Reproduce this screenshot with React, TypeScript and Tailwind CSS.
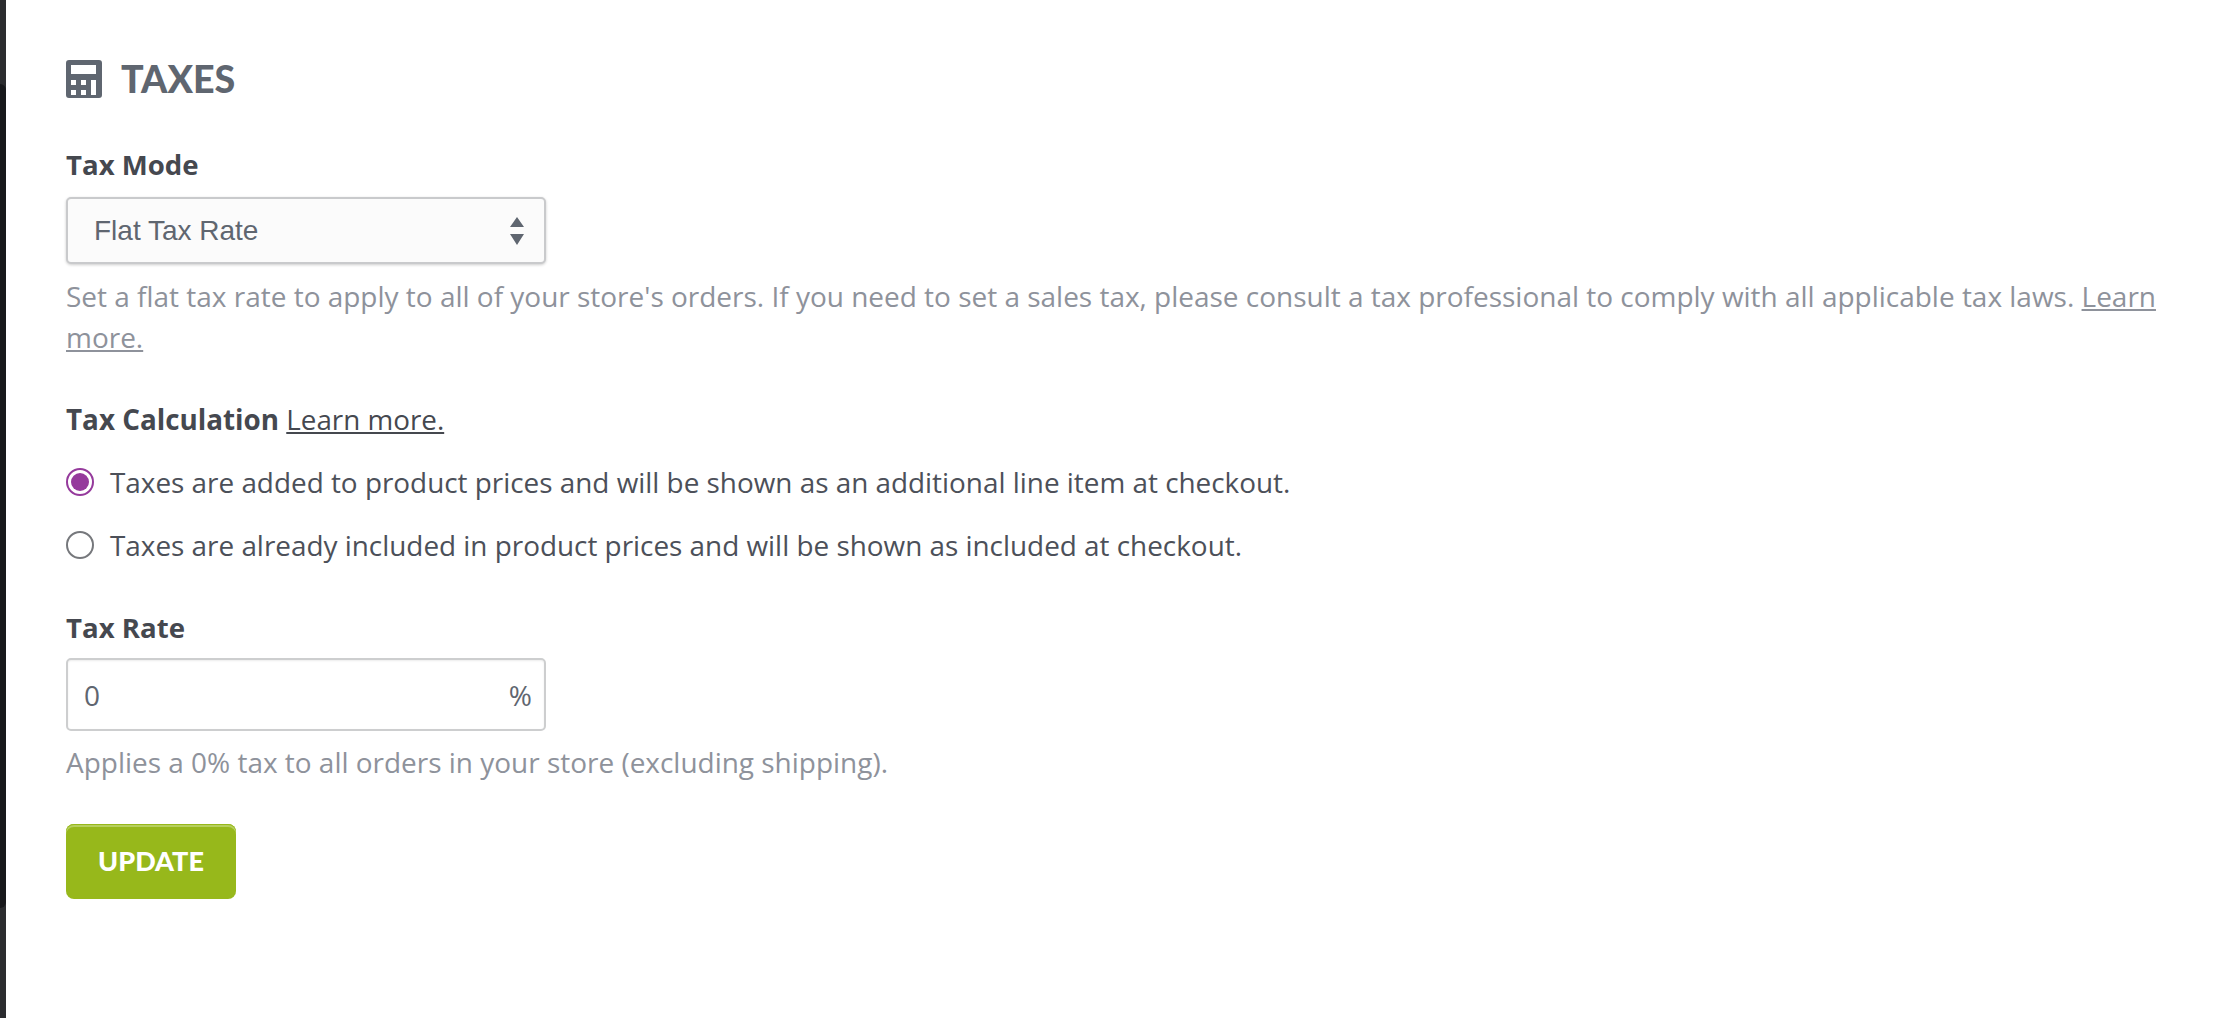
const openSans = "font-['Open_Sans',sans-serif]";

function CalculatorIcon() {
  return (
    <svg viewBox="0 0 36 38" className="w-[36px] h-[38px] shrink-0" fill="#5f6670">
      <path
        fillRule="evenodd"
        d="M3 0h30a3 3 0 0 1 3 3v32a3 3 0 0 1-3 3H3a3 3 0 0 1-3-3V3a3 3 0 0 1 3-3ZM5 5v9h25V5ZM5 20v5h5v-5ZM15 20v5h5v-5ZM25 20v15h5V20ZM5 30v5h5v-5ZM15 30v5h5v-5Z"
      />
    </svg>
  );
}

function Radio({ checked, label }: { checked?: boolean; label: string }) {
  return (
    <label className="flex items-center gap-[16px] text-[27.88px] leading-[40px] text-[#4c5059]">
      {checked ? (
        <span className="w-[28px] h-[28px] rounded-full border-2 border-[#953a9c] flex items-center justify-center shrink-0">
          <span className="w-[18px] h-[18px] rounded-full bg-[#953a9c]" />
        </span>
      ) : (
        <span className="w-[28px] h-[28px] rounded-full border-2 border-[#76787c] shrink-0" />
      )}
      {label}
    </label>
  );
}

export default function App() {
  return (
    <div className={`flex min-h-[1018px] bg-white ${openSans}`}>
      {/* window edge */}
      <div className="w-[6px] shrink-0 flex flex-col bg-[#2b2c2f]">
        <div className="h-[84px]" />
        <div className="h-[824px] bg-[#17181b] rounded-tr-[6px] rounded-br-[6px]" />
      </div>

      <div className="flex-1 pl-[60px] pr-[80px] pt-[54px]">
        <div className="flex items-center gap-[19px] h-[50px]">
          <CalculatorIcon />
          <h2 className="font-['Lato',sans-serif] font-black text-[37.6px] text-[#5f6670] leading-none">TAXES</h2>
        </div>

        <div className="mt-[40px] font-bold text-[27.6px] leading-[40px] text-[#45484f]">Tax Mode</div>
        <div className="mt-[13px] w-[480px] h-[67px] border-2 border-[#c9cacc] rounded-[5px] bg-[#fbfbfb] shadow-[0_1px_3px_rgba(0,0,0,0.2)] flex items-center justify-between pl-[26px] pr-[20px]">
          <span className="font-['Liberation_Sans',sans-serif] text-[28px] text-[#5f6670]">Flat Tax Rate</span>
          <svg viewBox="0 0 14 28" className="w-[14px] h-[28px]" fill="#5f6670">
            <path d="M7 0l7 10H0ZM0 17h14l-7 11Z" />
          </svg>
        </div>
        <p className="mt-[12px] text-[27.98px] leading-[41px] text-[#8e929b]">
          Set a flat tax rate to apply to all of your store's orders. If you need to set a sales tax, please consult a tax professional to comply with all applicable tax laws.{' '}
          <a className="underline">Learn more.</a>
        </p>

        <div className="mt-[41px] text-[27.8px] leading-[40px] text-[#45484f]">
          <span className="font-bold">Tax Calculation</span> <a className="underline">Learn more.</a>
        </div>
        <div className="mt-[23px] flex flex-col gap-[23px]">
          <Radio checked label="Taxes are added to product prices and will be shown as an additional line item at checkout." />
          <Radio label="Taxes are already included in product prices and will be shown as included at checkout." />
        </div>

        <div className="mt-[42px] font-bold text-[27.6px] leading-[40px] text-[#45484f]">Tax Rate</div>
        <div className="mt-[11px] w-[480px] h-[73px] border-2 border-[#cdcecf] rounded-[5px] bg-white shadow-[inset_0_1px_2px_rgba(0,0,0,0.08)] flex items-center justify-between pl-[16px] pr-[12px] text-[#5f6670]">
          <span className="text-[28px]">0</span>
          <span className="text-[28px]">%</span>
        </div>
        <p className="mt-[11px] text-[27.96px] leading-[41px] text-[#8e929b]">
          Applies a 0% tax to all orders in your store (excluding shipping).
        </p>

        <button className="mt-[41px] w-[170px] h-[75px] rounded-[8px] bg-[#97b81b] shadow-[inset_0_1px_0_#97b81b,inset_0_3px_0_#b6cf5e] text-white font-['Lato',sans-serif] font-black text-[27px]">
          UPDATE
        </button>
      </div>
    </div>
  );
}
